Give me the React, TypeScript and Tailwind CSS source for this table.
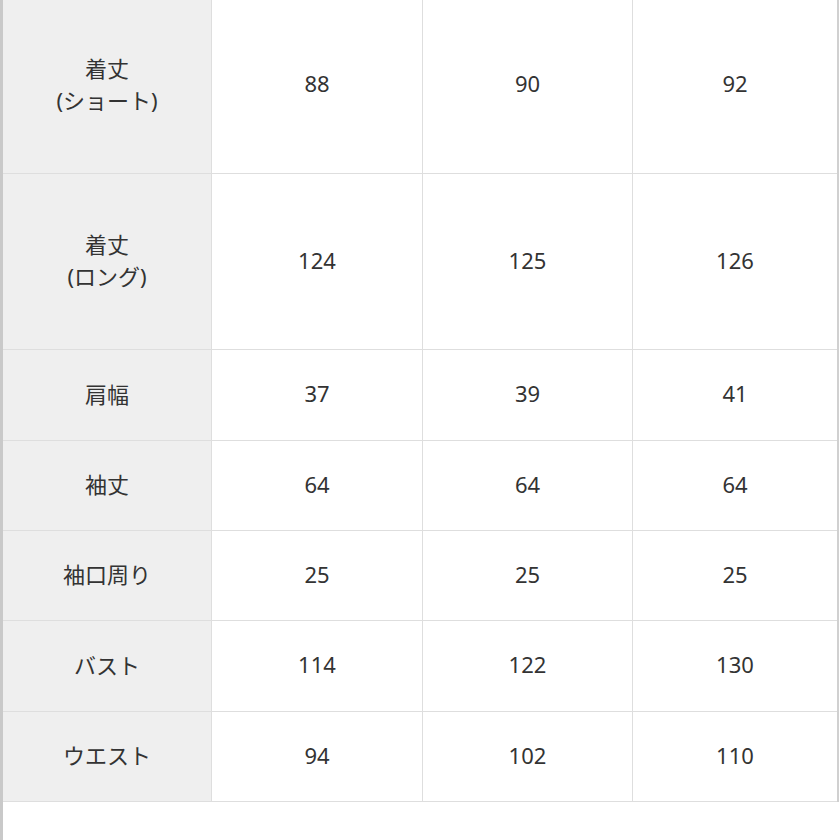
import React from "react";

type Row = { label: string[]; values: string[]; h: string; pad: string };

const rows: Row[] = [
  { label: ["着丈", "(ショート)"], values: ["88", "90", "92"], h: "h-[174px]", pad: "pb-[6px]" },
  { label: ["着丈", "(ロング)"], values: ["124", "125", "126"], h: "h-[176px]", pad: "pb-[3px]" },
  { label: ["肩幅"], values: ["37", "39", "41"], h: "h-[91px]", pad: "pb-[3px]" },
  { label: ["袖丈"], values: ["64", "64", "64"], h: "h-[90px]", pad: "pb-[3px]" },
  { label: ["袖口周り"], values: ["25", "25", "25"], h: "h-[90px]", pad: "pb-[3px]" },
  { label: ["バスト"], values: ["114", "122", "130"], h: "h-[91px]", pad: "pb-[3px]" },
  { label: ["ウエスト"], values: ["94", "102", "110"], h: "h-[90px]", pad: "pb-[3px]" },
];

export default function App() {
  return (
    <div
      className="w-[840px] h-[840px] bg-white text-[#333333] text-[22px] overflow-hidden flex"
      style={{ fontFamily: '"Noto Sans", "Noto Sans CJK JP", sans-serif' }}
    >
      <div className="w-[3px] bg-[#c9c9c9] shrink-0" />
      <div className="flex-1 flex flex-col">
        {rows.map((r, i) => (
          <div
            key={i}
            className={`grid grid-cols-[209px_211px_210px_1fr] border-b border-[#dedede] ${r.h}`}
          >
            <div
              className={`bg-[#efefef] border-r border-[#dedede] flex flex-col items-center justify-center leading-[32px] ${r.pad}`}
            >
              {r.label.map((l, j) => (
                <span key={j}>{l}</span>
              ))}
            </div>
            {r.values.map((v, j) => (
              <div
                key={j}
                className={`flex items-center justify-center ${r.pad} ${j < 2 ? "border-r border-[#dedede]" : ""}`}
              >
                {v}
              </div>
            ))}
          </div>
        ))}
      </div>
      <div className="w-[2px] bg-[#d0d0d0] shrink-0 h-[802px]" />
      <div className="w-[1px] shrink-0" />
    </div>
  );
}
